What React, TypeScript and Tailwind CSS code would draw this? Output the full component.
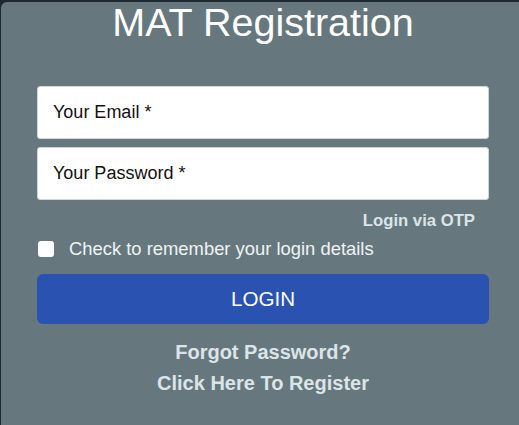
import React from "react";

export default function App() {
  return (
    <div
      className="w-[519px] h-[425px] overflow-hidden bg-[#1d2a30] pt-[2px] pl-[1px]"
      style={{ fontFamily: '"Liberation Sans", Arial, sans-serif' }}
    >
      <div className="w-[524px] h-[430px] bg-[#66787d] rounded-tl-[6px] px-[36px] flex flex-col">
        <h1 className="mt-[1px] h-[39px] leading-[39px] text-[39.5px] text-white text-center font-normal">
          MAT Registration
        </h1>

        <div className="mt-[44px] flex flex-col gap-[8px]">
          <div className="h-[53px] bg-white border border-[#cfd5d8] rounded-[3px] flex items-center pl-[15px] text-[18px] text-[#111]">
            Your Email *
          </div>
          <div className="h-[53px] bg-white border border-[#cfd5d8] rounded-[3px] flex items-center pl-[15px] text-[18px] text-[#111]">
            Your Password *
          </div>
        </div>

        <div className="mt-[11px] h-[20px] leading-[20px] flex justify-end pr-[14px] text-[16.7px] font-bold text-[#dbe4e9]">
          Login via OTP
        </div>

        <div className="mt-[8px] h-[20px] flex items-center">
          <span className="ml-[1px] w-[16px] h-[16px] bg-white rounded-[3px] shrink-0" />
          <span className="ml-[15px] text-[18.4px] leading-[20px] text-[#eef3f5]">
            Check to remember your login details
          </span>
        </div>

        <div className="mt-[15px] h-[50px] bg-[#2a52b0] rounded-[6px] flex items-center justify-center text-white text-[20.6px]">
          LOGIN
        </div>

        <div className="mt-[17px] h-[22px] leading-[22px] text-center text-[20px] font-bold text-[#dbe4e9]">
          Forgot Password?
        </div>
        <div className="mt-[9px] h-[22px] leading-[22px] text-center text-[20px] font-bold text-[#dbe4e9]">
          Click Here To Register
        </div>
      </div>
    </div>
  );
}
